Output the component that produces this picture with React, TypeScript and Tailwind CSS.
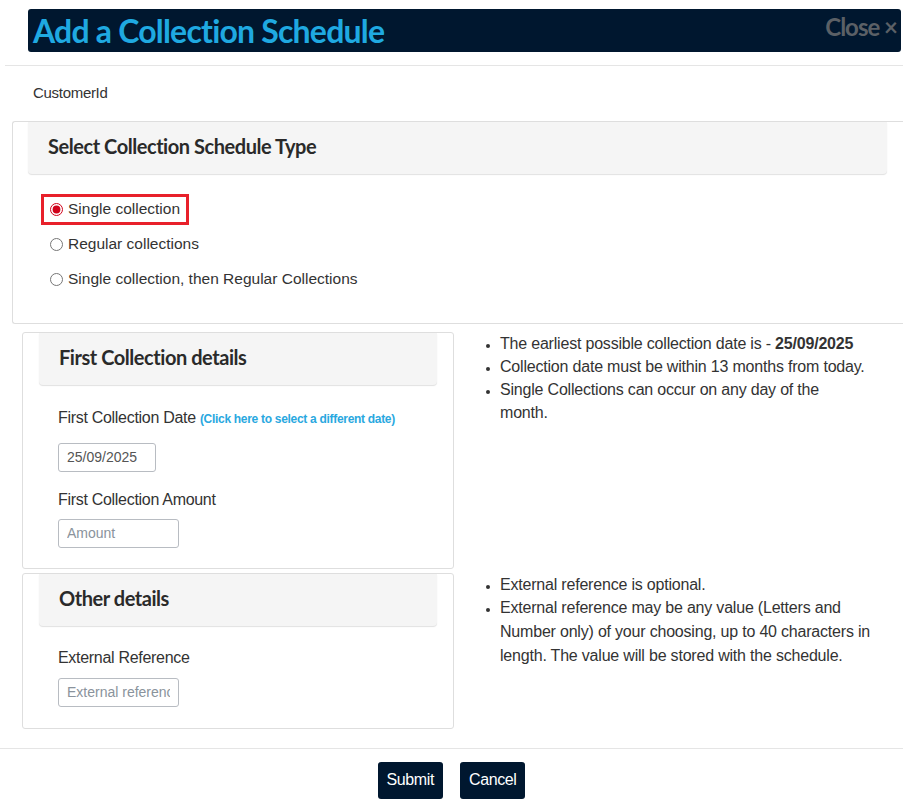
import { useState } from "react";

const lato = "font-['Lato','Open_Sans',sans-serif]";
const arial = "font-['Liberation_Sans',Arial,sans-serif]";

const scheduleTypes = [
  "Single collection",
  "Regular collections",
  "Single collection, then Regular Collections",
];

function PanelHeading({ title }: { title: string }) {
  return (
    <div className="flex h-[52px] items-center rounded-b bg-[#f5f5f5] px-5 pb-[3px] shadow-[0_1px_1px_rgba(0,0,0,0.12)]">
      <h3 className={`${lato} text-[20px] font-bold tracking-[-0.45px] text-[#2a2a2a]`}>
        {title}
      </h3>
    </div>
  );
}

export default function App() {
  const [scheduleType, setScheduleType] = useState(scheduleTypes[0]);

  const inputStyles =
    "h-[29px] rounded-[3px] border border-[#b8bcc2] bg-white px-2 text-[14px] text-[#555] outline-none placeholder:text-[#8a939c]";

  return (
    <div className={`${arial} min-h-screen w-full bg-white text-[#333]`}>
      {/* modal title bar */}
      <div className="pl-[28px] pr-[2px] pt-[9px]">
        <div className="flex h-[43px] items-center justify-between rounded-[3px] bg-[#00172f] pl-[5px] pr-[4px]">
          <h1 className={`${lato} text-[32px] font-bold tracking-[-0.8px] text-[#1fa9e1]`}>
            Add a Collection Schedule
          </h1>
          <button className={`${lato} -mt-[8px] text-[24px] font-bold tracking-[-1px] text-[#5b6066]`}>
            Close ×
          </button>
        </div>
      </div>

      <div className="ml-[5px] mt-[13px] border-t border-[#e5e5e5]" />

      <div className="px-[33px] pt-[16px] text-[15px] tracking-[-0.3px] text-[#333]">
        CustomerId
      </div>

      {/* schedule type panel */}
      <div className="ml-[12px] mt-[16px] rounded-l-[3px] border border-r-0 border-[#dedede] pb-[28px]">
        <div className="ml-[15px] mr-[16px]">
          <PanelHeading title="Select Collection Schedule Type" />
        </div>
        <div className="mt-[20px] flex flex-col gap-[4px] pl-[28px]">
          {scheduleTypes.map((type, i) => (
            <label
              key={type}
              className={`flex h-[31px] w-fit items-center gap-[5px] border-[3px] pl-[6px] pr-[6px] text-[15.5px] text-[#333] ${
                i === 0 ? "border-[#e8202a]" : "border-transparent"
              }`}
            >
              <input
                type="radio"
                name="scheduleType"
                checked={scheduleType === type}
                onChange={() => setScheduleType(type)}
                className="m-0 h-[13px] w-[13px] accent-[#d0021b]"
              />
              {type}
            </label>
          ))}
        </div>
      </div>

      {/* first collection details */}
      <div className="mt-[8px] flex">
        <div className="ml-[22px] w-[432px] shrink-0 rounded-[3px] border border-[#dedede] pb-[20px]">
          <div className="mx-4">
            <PanelHeading title="First Collection details" />
          </div>
          <div className="px-[35px] pt-[21px]">
            <div className="text-[16px] tracking-[-0.3px] text-[#333]">
              First Collection Date{" "}
              <a className="cursor-pointer text-[12px] font-bold text-[#29a8e0]">
                (Click here to select a different date)
              </a>
            </div>
            <input
              defaultValue="25/09/2025"
              className={`${inputStyles} mt-[13px] w-[98px]`}
            />
            <div className="mt-[16px] text-[16px] tracking-[-0.3px] text-[#333]">
              First Collection Amount
            </div>
            <input placeholder="Amount" className={`${inputStyles} mt-[7px] w-[121px]`} />
          </div>
        </div>
        <ul className="ml-[31px] mt-0 list-disc pl-[15px] text-[16px] leading-[23.3px] tracking-[-0.2px] text-[#333] marker:text-[12px]">
          <li>
            The earliest possible collection date is - <b>25/09/2025</b>
          </li>
          <li>Collection date must be within 13 months from today.</li>
          <li className="w-[340px]">Single Collections can occur on any day of the month.</li>
        </ul>
      </div>

      {/* other details */}
      <div className="mt-[4px] flex">
        <div className="ml-[22px] w-[432px] shrink-0 rounded-[3px] border border-[#dedede] pb-[21px]">
          <div className="mx-4">
            <PanelHeading title="Other details" />
          </div>
          <div className="px-[35px] pt-[20px]">
            <div className="text-[16px] tracking-[-0.3px] text-[#333]">External Reference</div>
            <input
              placeholder="External reference"
              className={`${inputStyles} mt-[8px] w-[121px]`}
            />
          </div>
        </div>
        <ul className="ml-[31px] mt-0 w-[400px] list-disc pl-[15px] text-[16px] leading-[23.7px] tracking-[-0.2px] text-[#333] marker:text-[12px]">
          <li>External reference is optional.</li>
          <li>
            External reference may be any value (Letters and Number only) of your choosing, up to 40
            characters in length. The value will be stored with the schedule.
          </li>
        </ul>
      </div>

      {/* footer actions */}
      <div className="mt-[19px] flex justify-center gap-[17px] border-t border-[#e5e5e5] pt-[13px]">
        <button className="h-[37px] rounded-[3px] bg-[#00172f] px-[9px] text-[16px] tracking-[-0.4px] text-white">
          Submit
        </button>
        <button className="h-[37px] rounded-[3px] bg-[#00172f] px-[9px] text-[16px] tracking-[-0.4px] text-white">
          Cancel
        </button>
      </div>
    </div>
  );
}
